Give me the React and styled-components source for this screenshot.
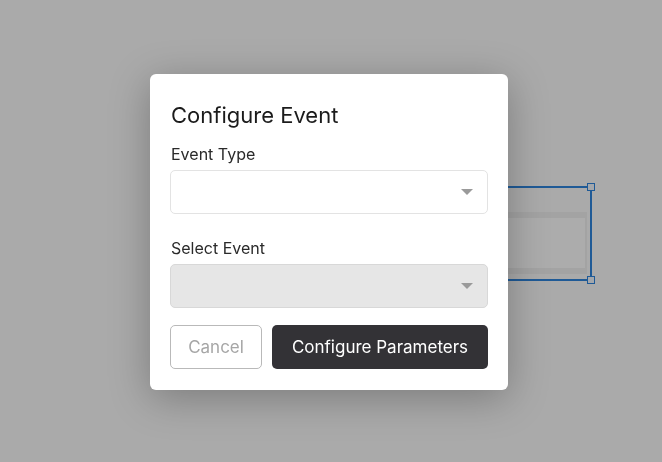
import React from 'react';
import styled, { createGlobalStyle } from 'styled-components';

const GlobalStyle = createGlobalStyle`
  html, body {
    margin: 0;
    padding: 0;
    height: 100%;
    background: #aaaaaa;
    font-family: Inter, "Noto Sans", sans-serif;
    overflow: hidden;
  }
  #root {
    height: 100%;
  }
`;

const Canvas = styled.div`
  position: relative;
  width: 100%;
  height: 100%;
  background: #aaaaaa;
`;

const Node = styled.div`
  position: absolute;
  left: ${props => props.x}px;
  top: ${props => props.y}px;
  width: ${props => props.w}px;
  height: ${props => props.h}px;
  border-style: solid;
  border-color: #a3a3a3;
  border-width: 6px 2px 6px 6px;
  background: #acacac;
  box-sizing: border-box;
`;

const Selection = styled.div`
  position: absolute;
  left: ${props => props.x}px;
  top: ${props => props.y}px;
  width: ${props => props.w}px;
  height: ${props => props.h}px;
  border: 2px solid #1f5a96;
  box-sizing: border-box;
`;

const Handle = styled.div`
  position: absolute;
  width: 8px;
  height: 8px;
  box-sizing: border-box;
  border: 1.5px solid #1f5a96;
  background: #a4a7ab;
  ${props => (props.top ? 'top: -5px;' : 'bottom: -5px;')}
  right: -5px;
`;

const Overlay = styled.div`
  position: fixed;
  inset: 0;
  display: flex;
  align-items: center;
  justify-content: center;
`;

const Dialog = styled.div`
  width: 358px;
  box-sizing: border-box;
  background: #ffffff;
  border-radius: 6px;
  padding: 27px 20px 21px 20px;
  box-shadow: 0 8px 40px rgba(0, 0, 0, 0.28);
  display: flex;
  flex-direction: column;
  transform: translate(-2px, 1px);
`;

const Title = styled.h2`
  margin: 0 0 15px 1px;
  font-size: 22px;
  line-height: 28px;
  font-weight: 400;
  color: #1b1b1b;
`;

const Label = styled.div`
  font-size: 16px;
  line-height: 20px;
  color: #2a2a2a;
  margin: 0 0 6px 1px;
`;

const Select = styled.div`
  height: 44px;
  box-sizing: border-box;
  border: 1px solid #e3e3e3;
  border-radius: 5px;
  background: ${props => (props.disabled ? '#e6e6e6' : '#ffffff')};
  border-color: ${props => (props.disabled ? '#d8d8d8' : '#e3e3e3')};
  display: flex;
  align-items: center;
  justify-content: flex-end;
  padding-right: 14px;
  margin-bottom: ${props => props.gap}px;
`;

const Caret = styled.div`
  width: 0;
  height: 0;
  border-left: 6px solid transparent;
  border-right: 6px solid transparent;
  border-top: 6px solid #9a9a9a;
`;

const Actions = styled.div`
  display: flex;
  gap: 10px;
`;

const Button = styled.button`
  height: 44px;
  box-sizing: border-box;
  border-radius: 5px;
  font-family: Inter, "Noto Sans", sans-serif;
  font-size: 17px;
  padding: 0;
  cursor: pointer;
  width: ${props => props.w}px;
  border: ${props => (props.primary ? 'none' : '1px solid #b9b9b9')};
  background: ${props => (props.primary ? '#333236' : '#ffffff')};
  color: ${props => (props.primary ? '#ffffff' : '#a6a6a6')};
`;

export default function App() {
  return (
    <>
      <GlobalStyle />
      <Canvas>
        <Node x={250} y={212} w={337} h={62} />
        <Selection x={240} y={186} w={352} h={95}>
          <Handle top />
          <Handle />
        </Selection>
      </Canvas>
      <Overlay>
        <Dialog>
          <Title>Configure Event</Title>
          <Label>Event Type</Label>
          <Select gap={24}>
            <Caret />
          </Select>
          <Label>Select Event</Label>
          <Select disabled gap={17}>
            <Caret />
          </Select>
          <Actions>
            <Button w={92}>Cancel</Button>
            <Button primary w={216}>Configure Parameters</Button>
          </Actions>
        </Dialog>
      </Overlay>
    </>
  );
}
